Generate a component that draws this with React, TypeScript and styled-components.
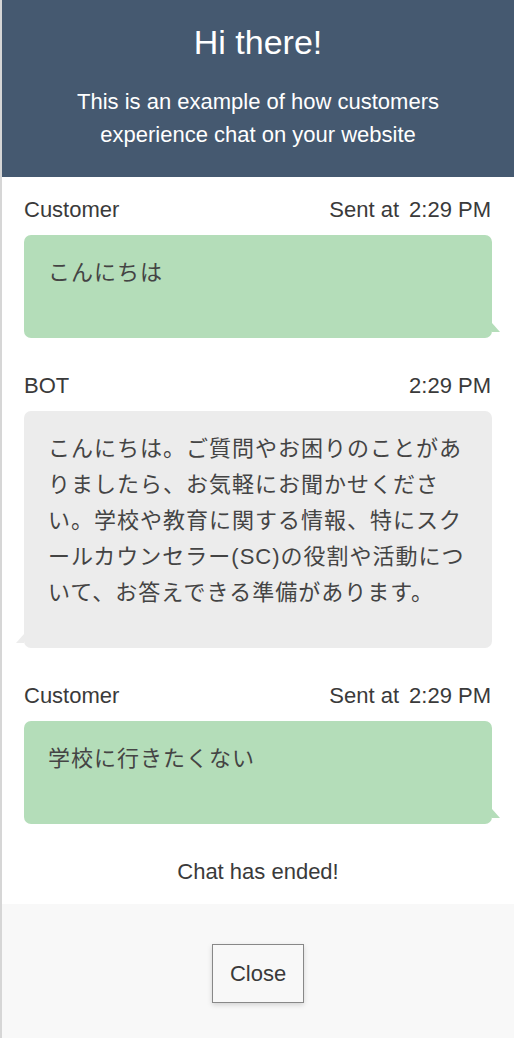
import React from 'react';
import styled, { createGlobalStyle } from 'styled-components';

const GlobalStyle = createGlobalStyle`
  html, body {
    margin: 0;
    padding: 0;
    background: #d6d6d6;
  }
  body {
    font-family: "Liberation Sans", "Noto Sans CJK JP", Arial, sans-serif;
  }
  * {
    box-sizing: border-box;
  }
`;

const Panel = styled.div`
  margin-left: 2px;
  min-height: 100vh;
  display: flex;
  flex-direction: column;
  background: #ffffff;
  color: #3a3a3a;
  font-size: 22px;
  line-height: 33px;
`;

const Header = styled.header`
  background-color: #455970;
  color: #ffffff;
  text-align: center;
  padding: 22px 60px 26px;
`;

const Title = styled.h1`
  margin: 0 0 23px 0;
  font-size: 34px;
  line-height: 40px;
  font-weight: normal;
`;

const Subtitle = styled.p`
  margin: 0;
  font-size: 22px;
  line-height: 33px;
`;

const Messages = styled.div`
  display: flex;
  flex-direction: column;
  gap: 31px;
  padding: 16px 22px 0;
`;

const Message = styled.div`
  display: flex;
  flex-direction: column;
  gap: 9px;
`;

const MessageMeta = styled.div`
  display: flex;
  justify-content: space-between;
  padding: 0 1px 0 0;
`;

const Time = styled.span`
  margin-left: 10px;
`;

const Bubble = styled.div<{ fromBot?: boolean }>`
  position: relative;
  min-height: 103px;
  padding: 20px 24px ${props => props.fromBot ? '37px' : '36px'};
  border-radius: 7px;
  background-color: ${props => props.fromBot ? '#ececec' : '#b4ddb9'};
  color: #444444;
  font-family: "Liberation Sans", "Noto Sans CJK JP", sans-serif;
  font-size: 22px;
  line-height: 36px;
  letter-spacing: 1px;

  &::after {
    content: '';
    position: absolute;
    width: 0;
    height: 0;
    bottom: ${props => props.fromBot ? '5px' : '6px'};
    ${props => props.fromBot
      ? `left: -8px; border-right: 8px solid #ececec;`
      : `right: -8px; border-left: 8px solid #b4ddb9;`}
    border-top: 9px solid transparent;
  }
`;

const Ended = styled.div`
  text-align: center;
  padding: 31px 0 16px;
`;

const Footer = styled.footer`
  flex: 1;
  background-color: #f8f8f8;
  display: flex;
  justify-content: center;
  align-items: flex-start;
  padding-top: 40px;
`;

const CloseButton = styled.button`
  font-family: "Liberation Sans", Arial, sans-serif;
  font-size: 22px;
  line-height: 33px;
  color: #3a3a3a;
  background: #f8f8f8;
  border: 1px solid #888888;
  border-radius: 0;
  padding: 12px 17px;
  box-shadow: 0 2px 5px rgba(0, 0, 0, 0.15);
  cursor: pointer;
`;

type ChatMessage = {
  id: number;
  sender: string;
  fromBot: boolean;
  time: string;
  text: string;
};

const messages: ChatMessage[] = [
  { id: 1, sender: 'Customer', fromBot: false, time: '2:29 PM', text: 'こんにちは' },
  {
    id: 2,
    sender: 'BOT',
    fromBot: true,
    time: '2:29 PM',
    text: 'こんにちは。ご質問やお困りのことがありましたら、お気軽にお聞かせください。学校や教育に関する情報、特にスクールカウンセラー(SC)の役割や活動について、お答えできる準備があります。',
  },
  { id: 3, sender: 'Customer', fromBot: false, time: '2:29 PM', text: '学校に行きたくない' },
];

const App: React.FC = () => {
  return (
    <>
      <GlobalStyle />
      <Panel>
        <Header>
          <Title>Hi there!</Title>
          <Subtitle>This is an example of how customers experience chat on your website</Subtitle>
        </Header>

        <Messages>
          {messages.map(msg => (
            <Message key={msg.id}>
              <MessageMeta>
                <span>{msg.sender}</span>
                <span>
                  {!msg.fromBot && 'Sent at'}
                  <Time>{msg.time}</Time>
                </span>
              </MessageMeta>
              <Bubble fromBot={msg.fromBot}>{msg.text}</Bubble>
            </Message>
          ))}
        </Messages>

        <Ended>Chat has ended!</Ended>

        <Footer>
          <CloseButton>Close</CloseButton>
        </Footer>
      </Panel>
    </>
  );
};

export default App;
